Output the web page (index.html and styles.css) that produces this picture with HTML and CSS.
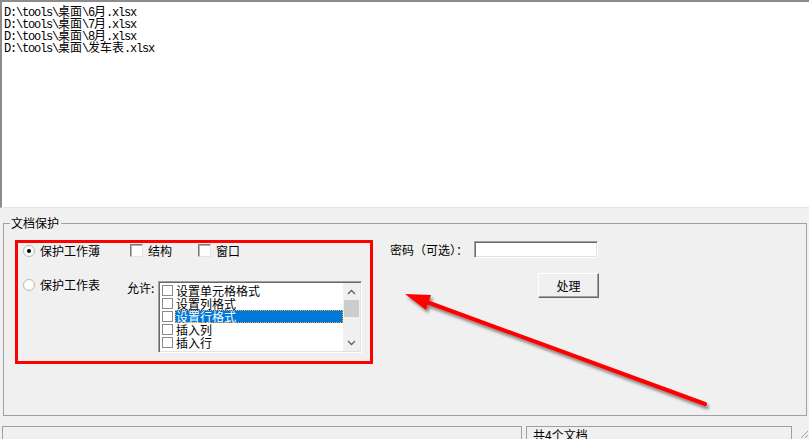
FILE: index.html
```html
<!DOCTYPE html>
<html>
<head>
<meta charset="utf-8">
<link rel="stylesheet" href="styles.css">
</head>
<body>
<div class="files">
  <div class="ln">D:\tools\<span class="cj">桌面</span>\6<span class="cj">月</span>.xlsx</div>
  <div class="ln">D:\tools\<span class="cj">桌面</span>\7<span class="cj">月</span>.xlsx</div>
  <div class="ln">D:\tools\<span class="cj">桌面</span>\8<span class="cj">月</span>.xlsx</div>
  <div class="ln">D:\tools\<span class="cj">桌面</span>\<span class="cj">发车表</span>.xlsx</div>
</div>
<fieldset class="grp">
  <legend>文档保护</legend>
  <div class="grp-body">
    <div class="mark">
      <div class="row1">
        <label class="opt"><span class="radio on"></span>保护工作薄</label>
        <label class="chk"><span class="box"></span>结构</label>
        <label class="chk"><span class="box"></span>窗口</label>
      </div>
      <div class="row2">
        <label class="opt2"><span class="radio"></span>保护工作表</label>
        <span class="allow">允许:</span>
        <div class="list">
          <ul class="items">
            <li><span class="sbox"></span><span class="txt">设置单元格格式</span></li>
            <li><span class="sbox"></span><span class="txt">设置列格式</span></li>
            <li><span class="sbox"></span><span class="txt sel">设置行格式</span></li>
            <li><span class="sbox"></span><span class="txt">插入列</span></li>
            <li><span class="sbox"></span><span class="txt">插入行</span></li>
          </ul>
          <div class="sb">
            <span class="arr"><svg width="9" height="6" viewBox="0 0 9 6"><path d="M1 5 L4.5 1.5 L8 5" fill="none" stroke="#606060" stroke-width="1.3"/></svg></span>
            <span class="thumb"></span>
            <span class="track"></span>
            <span class="arr"><svg width="9" height="6" viewBox="0 0 9 6"><path d="M1 1 L4.5 4.5 L8 1" fill="none" stroke="#606060" stroke-width="1.3"/></svg></span>
          </div>
        </div>
      </div>
    </div>
    <div class="side">
      <div class="pw"><span class="pwl">密码（可选）：</span><span class="input"></span></div>
      <button class="btn">处理</button>
    </div>
  </div>
</fieldset>
<div class="status">
  <div class="pane p1"></div>
  <div class="pane p2">共4个文档</div>
  <svg class="grip" width="9" height="9" viewBox="0 0 9 9"><path d="M8 1 L1 8 M8 5 L5 8" stroke="#a0a0a0" stroke-width="1"/></svg>
</div>
<svg class="arrow" width="809" height="439" viewBox="0 0 809 439">
  <defs>
    <filter id="sh" x="-10%" y="-20%" width="130%" height="160%">
      <feDropShadow dx="2" dy="3" stdDeviation="1.8" flood-color="#000" flood-opacity="0.45"/>
    </filter>
  </defs>
  <g filter="url(#sh)">
    <line x1="705" y1="404" x2="424" y2="301" stroke="#ff0000" stroke-width="4" stroke-linecap="round"/>
    <polygon points="405,294 431,295 426,310" fill="#ff0000"/>
  </g>
</svg>
</body>
</html>
```
FILE: styles.css
```css
* { box-sizing: border-box; }
html, body { margin: 0; padding: 0; }
body {
  width: 809px;
  height: 439px;
  overflow: hidden;
  background: #f0f0f0;
  font: 12px/12px "Noto Sans CJK SC", "Noto Sans", sans-serif;
  color: #000;
  position: relative;
}
.files {
  height: 208px;
  background: #fff;
  border-top: 2px solid #8c8c8c;
  border-left: 2px solid #8c8c8c;
  border-bottom: 1px solid #e3e3e3;
  padding: 3px 2px;
  font-family: "Liberation Mono", "Noto Sans CJK SC", monospace;
  font-size: 12px;
  letter-spacing: -1.2px;
  line-height: 12px;
}
.files .ln { height: 12px; white-space: pre; }
.files .cj { font-family: "Noto Sans CJK SC", sans-serif; letter-spacing: 0; }

.grp {
  margin: 9px 2px 0 3px;
  padding: 0;
  border: 1px solid #a0a0a0;
  height: 199px;
  min-width: 0;
}
.grp legend {
  padding: 0 2px 0 1px;
  margin-left: 6px;
  line-height: 12px;
  height: 12px;
  font-size: 12px;
}
.grp-body {
  display: flex;
  padding: 11px 0 0 11px;
}
.mark {
  width: 358px;
  height: 124px;
  border: 3px solid #ff0000;
  padding: 1px 0 0 5px;
}
.row1 { display: flex; align-items: center; height: 13px; }
.opt, .opt2 { display: flex; align-items: center; gap: 5px; }
.opt { width: 107px; }
.opt2 { width: 104px; height: 13px; }
.chk { width: 68px; display: flex; align-items: center; gap: 5px; }
.radio {
  width: 12px; height: 12px; border-radius: 50%;
  background: #fff;
  border: 1px solid #b8b8b8;
  display: flex; align-items: center; justify-content: center;
  flex: none;
}
.radio.on::after {
  content: ""; width: 4px; height: 4px; border-radius: 50%; background: #000;
}
.box {
  width: 13px; height: 13px; flex: none;
  background: #fff;
  border: 1px solid;
  border-color: #7a7a7a #e3e3e3 #e3e3e3 #7a7a7a;
  box-shadow: inset 1px 1px 0 #b0b0b0;
}
.row2 { display: flex; align-items: flex-start; margin-top: 21px; }
.allow { width: 31px; margin-top: 4px; }
.list {
  width: 204px; height: 72px; margin-top: 3px;
  display: flex;
  background: #fff;
  border: 1px solid;
  border-color: #a0a0a0 #fff #fff #a0a0a0;
  box-shadow: inset 1px 1px 0 #696969, inset -1px -1px 0 #e3e3e3;
  padding: 1px;
}
.items { flex: 1; margin: 0; padding: 1px 0 0 0; list-style: none; min-width: 0; }
.items li { height: 13px; display: flex; align-items: center; }
.sbox {
  width: 11px; height: 11px; margin-left: 2px; flex: none;
  border: 1px solid #8a8a8a; background: #fff;
}
.txt { margin-left: 2px; padding-left: 1px; height: 13px; line-height: 13px; flex: 1; }
.txt.sel {
  background: #0078d7; color: #fff;
  outline: 1px dotted #f0a040; outline-offset: -1px;
}
.sb { width: 17px; display: flex; flex-direction: column; background: #f0f0f0; }
.arr { height: 17px; display: flex; align-items: center; justify-content: center; flex: none; }
.thumb { height: 17px; background: #cdcdcd; margin: 0 1px; flex: none; }
.track { flex: 1; }

.side { margin-left: 17px; }
.pw { display: flex; align-items: center; height: 17px; margin-top: 1px; }
.pwl { width: 84px; }
.input {
  width: 124px; height: 17px; background: #fff;
  border: 1px solid;
  border-color: #a0a0a0 #fff #fff #a0a0a0;
  box-shadow: inset 1px 1px 0 #696969, inset -1px -1px 0 #e3e3e3;
}
.btn {
  display: block;
  margin: 15px 0 0 148px;
  width: 61px; height: 25px;
  padding: 0;
  font: 12px/12px "Noto Sans CJK SC", sans-serif;
  color: #000;
  background: #f0f0f0;
  border: 1px solid;
  border-color: #fff #696969 #696969 #fff;
  box-shadow: inset -1px -1px 0 #a0a0a0;
}

.status { display: flex; margin-top: 10px; height: 13px; padding-left: 2px; position: relative; }
.pane { border: 1px solid #a0a0a0; border-bottom: none; height: 14px; }
.p1 { width: 520px; margin-right: 4px; }
.p2 { width: 266px; padding: 2px 0 0 6px; line-height: 12px; }
.grip { margin-left: 8px; margin-top: 4px; }

.arrow { position: absolute; left: 0; top: 0; pointer-events: none; }
```
